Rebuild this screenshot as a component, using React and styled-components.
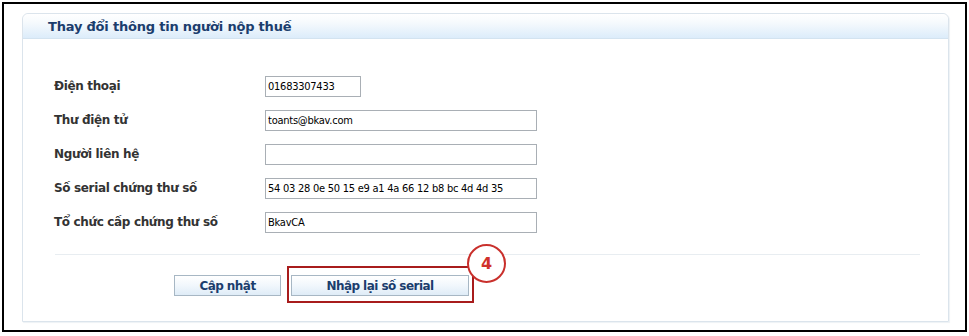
import React from "react";
import styled, { createGlobalStyle } from "styled-components";

const Global = createGlobalStyle`
  html, body { margin: 0; padding: 0; background: #fff; }
  body { font-family: "DejaVu Sans", Tahoma, sans-serif; }
`;

const Frame = styled.div`
  box-sizing: border-box;
  margin: 2px 0 0 2px;
  width: 965px;
  height: 330px;
  border: 2px solid #000;
  padding: 9px 0 0 18px;
`;

const Panel = styled.div`
  box-sizing: border-box;
  width: 927px;
  height: 309px;
  border: 1px solid #dbe4ec;
  border-radius: 6px 6px 0 0;
  box-shadow: 1px 1px 1px #eef2f5;
  display: flex;
  flex-direction: column;
`;

const Header = styled.div`
  height: 24px;
  border-bottom: 1px solid #d3e3f0;
  border-radius: 6px 6px 0 0;
  background: linear-gradient(#ffffff 0%, #f6fafd 35%, #dcecfa 100%);
  padding-left: 25px;
  display: flex;
  align-items: center;
  font-weight: bold;
  font-size: 13px;
  color: #1b3d6d;
  letter-spacing: -0.2px;
`;

const Form = styled.div`
  display: grid;
  grid-template-columns: 211px 1fr;
  grid-auto-rows: 34px;
  align-items: center;
  padding: 30px 0 0 31px;
`;

const Label = styled.div`
  font-weight: bold;
  font-size: 12px;
  color: #333;
  letter-spacing: -0.35px;
`;

const Input = styled.div`
  box-sizing: border-box;
  width: ${(p) => p.$w}px;
  height: 21px;
  border: 1px solid #a9afb5;
  background: #fff;
  font-size: 11px;
  color: #000;
  padding: 0 2px;
  display: flex;
  align-items: center;
  letter-spacing: -0.25px;
  font-stretch: condensed;
`;

const Separator = styled.div`
  height: 1px;
  background: #e8edf1;
  margin: 15px 28px 0 32px;
`;

const Buttons = styled.div`
  display: flex;
  gap: 10px;
  padding: 20px 0 0 151px;
`;

const Button = styled.div`
  box-sizing: border-box;
  width: ${(p) => p.$w}px;
  height: 21px;
  border: 1px solid #a7b7c4;
  background: linear-gradient(#ffffff 0%, #f1f7fc 50%, #dfecf7 100%);
  display: flex;
  align-items: center;
  justify-content: center;
  font-weight: bold;
  font-size: 12px;
  color: #1b3d6d;
  letter-spacing: -0.55px;
`;

const Highlight = styled.div`
  position: relative;
`;

const RedBox = styled.div`
  position: absolute;
  left: -4px;
  top: -9px;
  right: -5px;
  bottom: -7px;
  border: 2px solid #a81c1c;
  pointer-events: none;
`;

const Badge = styled.div`
  position: absolute;
  left: 176px;
  top: -31px;
  box-sizing: border-box;
  width: 39px;
  height: 39px;
  border-radius: 50%;
  border: 2px solid #c9302c;
  background: #fff;
  color: #d0312b;
  font-size: 16px;
  font-weight: 600;
  display: flex;
  align-items: center;
  justify-content: center;
  font-family: "DejaVu Sans", sans-serif;
`;

const rows = [
  ["Điện thoại", "01683307433", 96],
  ["Thư điện tử", "toants@bkav.com", 272],
  ["Người liên hệ", "", 272],
  ["Số serial chứng thư số", "54 03 28 0e 50 15 e9 a1 4a 66 12 b8 bc 4d 4d 35", 272],
  ["Tổ chức cấp chứng thư số", "BkavCA", 272],
];

export default function App() {
  return (
    <>
      <Global />
      <Frame>
        <Panel>
          <Header>Thay đổi thông tin người nộp thuế</Header>
          <Form>
            {rows.map(([l, v, w]) => (
              <React.Fragment key={l}>
                <Label>{l}</Label>
                <Input $w={w}>{v}</Input>
              </React.Fragment>
            ))}
          </Form>
          <Separator />
          <Buttons>
            <Button $w={107}>Cập nhật</Button>
            <Highlight>
              <Button $w={178}>Nhập lại số serial</Button>
              <RedBox />
              <Badge>4</Badge>
            </Highlight>
          </Buttons>
        </Panel>
      </Frame>
    </>
  );
}
